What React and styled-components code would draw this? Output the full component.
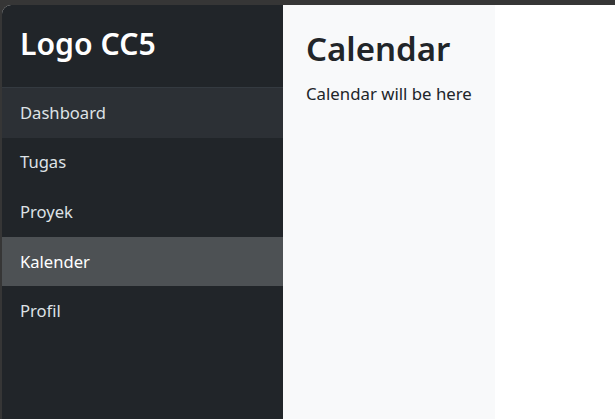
import React from "react";
import styled, { createGlobalStyle } from "styled-components";

const GlobalStyle = createGlobalStyle`
  html, body {
    margin: 0;
    padding: 0;
    height: 100%;
  }
  body {
    background-color: #363636;
    font-family: "Noto Sans", "Open Sans", sans-serif;
  }
  * {
    box-sizing: border-box;
  }
`;

const menu = ["Dashboard", "Tugas", "Proyek", "Kalender", "Profil"];

const App = () => {
  return (
    <>
      <GlobalStyle />
      <Frame>
        <Window>
          <Sidebar>
            <Brand>Logo CC5</Brand>
            <Nav>
              {menu.map((item) => (
                <NavItem
                  key={item}
                  $hover={item === "Dashboard"}
                  $active={item === "Kalender"}
                >
                  {item}
                </NavItem>
              ))}
            </Nav>
          </Sidebar>
          <Main>
            <Title>Calendar</Title>
            <Text>Calendar will be here</Text>
          </Main>
        </Window>
      </Frame>
    </>
  );
};

export default App;

const Frame = styled.div`
  height: 100vh;
  padding: 5px 0 0 2px;
`;

const Window = styled.div`
  height: 100%;
  display: flex;
  background-color: #ffffff;
  border-top-left-radius: 9px;
  overflow: hidden;
`;

const Sidebar = styled.aside`
  width: 281px;
  flex-shrink: 0;
  background-color: #212529;
  display: flex;
  flex-direction: column;
`;

const Brand = styled.div`
  padding: 22px 18px 26px;
  font-size: 30.2px;
  font-weight: 600;
  line-height: 34px;
  color: #ffffff;
  border-bottom: 1px solid #343a40;
`;

const Nav = styled.nav`
  display: flex;
  flex-direction: column;
`;

const NavItem = styled.div`
  padding: 12.8px 18px;
  font-size: 16.6px;
  line-height: 24px;
  color: ${(p) => (p.$active ? "#ffffff" : "#dee2e6")};
  background-color: ${(p) =>
    p.$active ? "#4d5154" : p.$hover ? "#2c3035" : "transparent"};
  cursor: pointer;
`;

const Main = styled.main`
  background-color: #f8f9fa;
  padding: 24px 23px;
  height: 100%;
`;

const Title = styled.h1`
  margin: 0 0 12px;
  font-size: 33px;
  font-weight: 600;
  line-height: 1.2;
  color: #212529;
`;

const Text = styled.p`
  margin: 0;
  font-size: 16.8px;
  line-height: 1.5;
  color: #212529;
`;
